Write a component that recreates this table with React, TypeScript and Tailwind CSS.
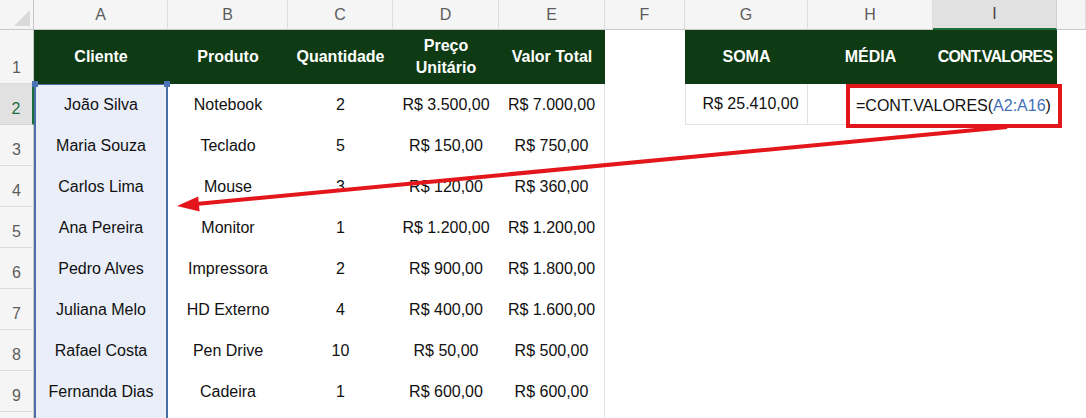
import React from 'react'

const COLS = ['A', 'B', 'C', 'D', 'E', 'F', 'G', 'H', 'I', '']

const ROWS = [
  ['João Silva', 'Notebook', '2', 'R$ 3.500,00', 'R$ 7.000,00'],
  ['Maria Souza', 'Teclado', '5', 'R$ 150,00', 'R$ 750,00'],
  ['Carlos Lima', 'Mouse', '3', 'R$ 120,00', 'R$ 360,00'],
  ['Ana Pereira', 'Monitor', '1', 'R$ 1.200,00', 'R$ 1.200,00'],
  ['Pedro Alves', 'Impressora', '2', 'R$ 900,00', 'R$ 1.800,00'],
  ['Juliana Melo', 'HD Externo', '4', 'R$ 400,00', 'R$ 1.600,00'],
  ['Rafael Costa', 'Pen Drive', '10', 'R$ 50,00', 'R$ 500,00'],
  ['Fernanda Dias', 'Cadeira', '1', 'R$ 600,00', 'R$ 600,00'],
  ['', '', '', '', ''],
]

const GREEN = 'bg-[#0e3b13] text-white font-bold'

// número da linha fica embaixo, como no Excel; a linha 10 quase não aparece
function RowHeader({ n, active, hidden }: { n: number; active?: boolean; hidden?: boolean }) {
  return (
    <div
      className={
        active
          ? 'flex items-end justify-center pb-[3px] bg-[#e1e1e1] text-[#1e6e3c] border-b border-[#d6d6d6] border-r-2 border-r-[#1e6e3c]'
          : 'flex items-end justify-center pb-[3px] bg-[#f5f5f5] text-[#5c5c5c] border-b border-[#dcdcdc] border-r border-r-[#c8c8c8]'
      }
    >
      {hidden ? null : n}
    </div>
  )
}

export default function App() {
  return (
    <div
      className="relative w-[1086px] h-[418px] overflow-hidden bg-white text-[16px] text-[#111]"
      style={{ fontFamily: '"Liberation Sans", Arial, sans-serif' }}
    >
      <div className="grid grid-cols-[34px_134px_120px_105px_106px_106px_80px_123px_125px_124px_29px] grid-rows-[30px_54px_repeat(9,41px)]">
        {/* canto */}
        <div className="relative bg-[#f5f5f5] border-r border-b border-[#c8c8c8]">
          <svg className="absolute right-[3px] bottom-[3px]" width="16" height="16" viewBox="0 0 16 16">
            <polygon points="16,0 16,16 0,16" fill="#d9d9d9" />
          </svg>
        </div>
        {COLS.map((c, i) =>
          c === 'I' ? (
            <div key={i} className="flex items-center justify-center bg-[#e1e1e1] text-[#444] border-r border-[#d0d0d0] border-b-2 border-b-[#1e6e3c]">
              {c}
            </div>
          ) : (
            <div key={i} className="flex items-center justify-center bg-[#f5f5f5] text-[#5c5c5c] border-r border-[#dcdcdc] border-b border-b-[#c8c8c8]">
              {c}
            </div>
          )
        )}

        {/* linha 1 - cabeçalhos */}
        <RowHeader n={1} />
        <div className={`${GREEN} flex items-center justify-center`}>Cliente</div>
        <div className={`${GREEN} flex items-center justify-center`}>Produto</div>
        <div className={`${GREEN} flex items-center justify-center`}>Quantidade</div>
        <div className={`${GREEN} flex items-center justify-center text-center leading-[22px]`}>
          Preço<br />Unitário
        </div>
        <div className={`${GREEN} flex items-center justify-center`}>Valor Total</div>
        <div className="bg-white" />
        <div className={`${GREEN} flex items-center justify-center`}>SOMA</div>
        <div className={`${GREEN} flex items-center justify-center`}>MÉDIA</div>
        <div className={`${GREEN} flex items-center justify-center tracking-[-0.8px]`}>CONT.VALORES</div>
        <div className="bg-white" />

        {/* dados */}
        {ROWS.map((r, i) => (
          <React.Fragment key={i}>
            <RowHeader n={i + 2} active={i === 0} hidden={i === ROWS.length - 1} />
            <div
              className={`relative flex items-center justify-center bg-[#e9eef8] border-l-2 border-r-2 border-[#4a6fa8] ${i === 0 ? 'border-t border-t-[#4a6fa8]' : ''}`}
            >
              {r[0]}
              {i === 0 && (
                <>
                  <span className="absolute -left-[4px] -top-[4px] w-[6px] h-[6px] bg-[#4a72b4]" />
                  <span className="absolute -right-[4px] -top-[4px] w-[6px] h-[6px] bg-[#4a72b4]" />
                </>
              )}
            </div>
            <div className="flex items-center justify-center">{r[1]}</div>
            <div className="flex items-center justify-center">{r[2]}</div>
            <div className="flex items-center justify-center">{r[3]}</div>
            <div className="flex items-center justify-center border-r border-[#e2e2e2]">{r[4]}</div>
            <div />
            {i === 0 ? (
              <>
                <div className="flex items-center justify-center pl-[8px] border-l border-r border-b border-[#e2e2e2]">R$ 25.410,00</div>
                <div className="border-b border-[#e2e2e2]" />
                <div />
              </>
            ) : (
              <>
                <div />
                <div />
                <div />
              </>
            )}
            <div />
          </React.Fragment>
        ))}
      </div>

      {/* destaque da fórmula */}
      <div className="absolute left-[846px] top-[84px] w-[216px] h-[44px] border-4 border-[#e3161b] flex items-center pl-[6px] bg-white">
        <span>
          =CONT.VALORES(<span className="text-[#3f6fb8]">A2:A16</span>)
        </span>
      </div>

      {/* seta */}
      <svg className="absolute left-0 top-0 pointer-events-none" width="1086" height="418">
        <line x1="1007" y1="127" x2="196" y2="204" stroke="#e3161b" strokeWidth="4" />
        <polygon points="177,206 199.6,211.5 198.2,196.5" fill="#e3161b" />
      </svg>
    </div>
  )
}
